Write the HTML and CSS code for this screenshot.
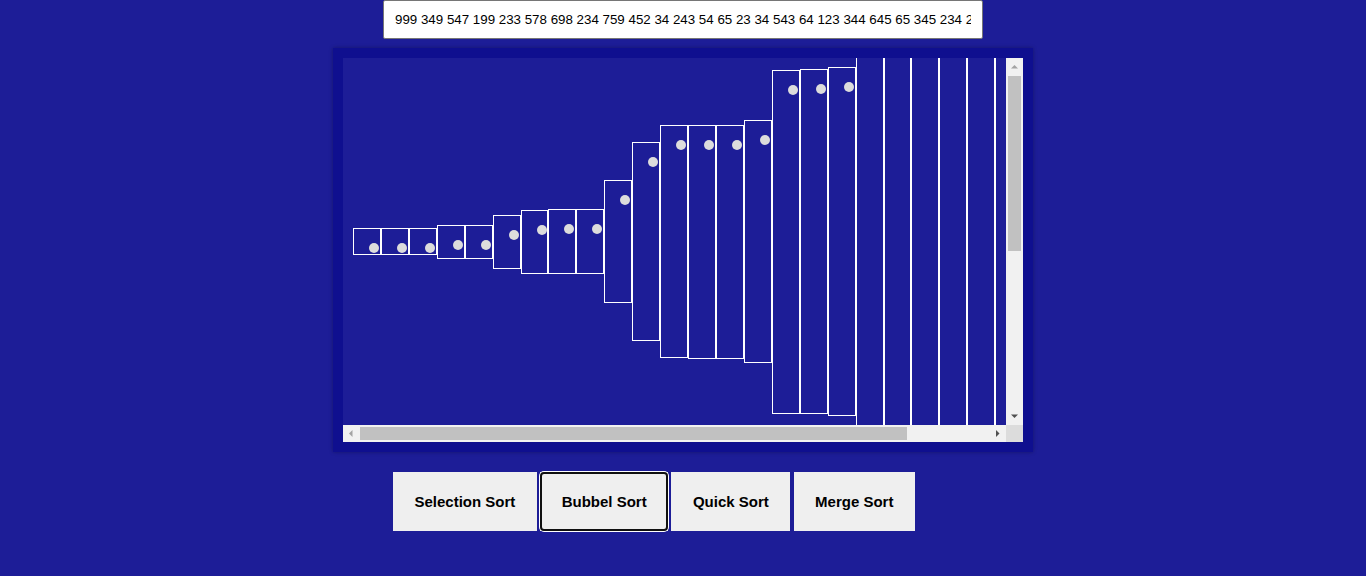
FILE: index.html
```html
<!DOCTYPE html>
<html>
<head>
<meta charset="utf-8">
<title>Sorting Visualizer</title>
<link rel="stylesheet" href="styles.css">
</head>
<body>
<div class="page">
  <input class="values" type="text" value="999 349 547 199 233 578 698 234 759 452 34 243 54 65 23 34 543 64 123 344 645 65 345 234 25 18 1030">
  <div class="frame">
    <div class="viewport">
      <div class="bars">
        <div class="bar" style="height:18px"><span class="dot"></span></div>
        <div class="bar" style="height:23px"><span class="dot"></span></div>
        <div class="bar" style="height:25px"><span class="dot"></span></div>
        <div class="bar" style="height:34px"><span class="dot"></span></div>
        <div class="bar" style="height:34px"><span class="dot"></span></div>
        <div class="bar" style="height:54px"><span class="dot"></span></div>
        <div class="bar" style="height:64px"><span class="dot"></span></div>
        <div class="bar" style="height:65px"><span class="dot"></span></div>
        <div class="bar" style="height:65px"><span class="dot"></span></div>
        <div class="bar" style="height:123px"><span class="dot"></span></div>
        <div class="bar" style="height:199px"><span class="dot"></span></div>
        <div class="bar" style="height:233px"><span class="dot"></span></div>
        <div class="bar" style="height:234px"><span class="dot"></span></div>
        <div class="bar" style="height:234px"><span class="dot"></span></div>
        <div class="bar" style="height:243px"><span class="dot"></span></div>
        <div class="bar" style="height:344px"><span class="dot"></span></div>
        <div class="bar" style="height:345px"><span class="dot"></span></div>
        <div class="bar" style="height:349px"><span class="dot"></span></div>
        <div class="bar" style="height:452px"><span class="dot"></span></div>
        <div class="bar" style="height:543px"><span class="dot"></span></div>
        <div class="bar" style="height:547px"><span class="dot"></span></div>
        <div class="bar" style="height:578px"><span class="dot"></span></div>
        <div class="bar" style="height:645px"><span class="dot"></span></div>
        <div class="bar" style="height:698px"><span class="dot"></span></div>
        <div class="bar" style="height:759px"><span class="dot"></span></div>
        <div class="bar" style="height:999px"><span class="dot"></span></div>
        <div class="bar" style="height:1030px"><span class="dot"></span></div>
      </div>
    </div>
    <div class="vscroll">
      <svg class="arrow" width="17" height="17" viewBox="0 0 17 17"><polygon class="arrow-off" points="5,10.5 12,10.5 8.5,7"/></svg>
      <div class="vtrack"><div class="vthumb"></div></div>
      <svg class="arrow" width="17" height="17" viewBox="0 0 17 17"><polygon class="arrow-on" points="5,6.5 12,6.5 8.5,10"/></svg>
    </div>
    <div class="hscroll">
      <svg class="arrow" width="17" height="17" viewBox="0 0 17 17"><polygon class="arrow-off" points="9.5,5 9.5,12 6,8.5"/></svg>
      <div class="htrack"><div class="hthumb"></div></div>
      <svg class="arrow" width="17" height="17" viewBox="0 0 17 17"><polygon class="arrow-on" points="7,5 7,12 10.5,8.5"/></svg>
    </div>
    <div class="corner"></div>
  </div>
  <div class="buttons">
    <button class="btn" type="button">Selection Sort</button>
    <button class="btn btn-active" type="button">Bubbel Sort</button>
    <button class="btn" type="button">Quick Sort</button>
    <button class="btn" type="button">Merge Sort</button>
  </div>
</div>
</body>
</html>
```

FILE: styles.css
```css
html, body {
  margin: 0;
  padding: 0;
}

body {
  background: #1d1d97;
  font-family: "Liberation Sans", Arial, sans-serif;
  height: 576px;
  overflow: hidden;
}

.page {
  display: flex;
  flex-direction: column;
  align-items: center;
}

.values {
  box-sizing: border-box;
  width: 600px;
  height: 39px;
  margin: 0;
  padding: 0 11px;
  border: 1px solid #767676;
  border-radius: 2px;
  background: #fff;
  color: #000;
  font-family: "Liberation Sans", Arial, sans-serif;
  font-size: 13.333px;
  outline: none;
}

.frame {
  box-sizing: border-box;
  width: 700px;
  height: 404px;
  margin-top: 9px;
  border: 10px solid #0f0f8f;
  box-shadow: 0 0 4px rgba(0, 0, 0, 0.3);
  background: #1d1d97;
  display: grid;
  grid-template-columns: 663px 17px;
  grid-template-rows: 367px 17px;
}

.viewport {
  overflow: hidden;
  height: 367px;
}

.bars {
  display: flex;
  align-items: center;
  height: 100%;
  padding-left: 10px;
}

.bar {
  flex: none;
  box-sizing: border-box;
  width: 27.93px;
  min-height: 27px;
  border: 1px solid #fff;
  padding: 14px 0 0 15px;
}

.dot {
  display: block;
  width: 10px;
  height: 10px;
  border-radius: 50%;
  background: #dcdcdc;
}

/* drawn scrollbars */
.vscroll {
  display: flex;
  flex-direction: column;
  background: #f1f1f1;
}

.hscroll {
  display: flex;
  background: #f1f1f1;
}

.arrow {
  display: block;
  flex: none;
}

.arrow-off {
  fill: #a3a3a3;
}

.arrow-on {
  fill: #505050;
}

.vtrack {
  flex: 1;
  padding: 1px 2px 0;
}

.vthumb {
  height: 175px;
  background: #c1c1c1;
}

.htrack {
  flex: 1;
  padding: 2px 0;
}

.hthumb {
  width: 547px;
  height: 13px;
  background: #c1c1c1;
}

.corner {
  background: #dcdcdc;
}

.buttons {
  box-sizing: border-box;
  width: 600px;
  padding-left: 10px;
  margin-top: 20px;
  display: flex;
  gap: 3.3px;
}

.btn {
  position: relative;
  margin: 0;
  padding: 21px 21.5px;
  border: none;
  background: #efefef;
  color: #000;
  font-family: "Liberation Sans", Arial, sans-serif;
  font-size: 15px;
  font-weight: bold;
  line-height: 17px;
}

.btn-active::after {
  content: "";
  position: absolute;
  inset: 0;
  border: 2px solid #101010;
  border-radius: 4px;
  box-shadow: 0 0 0 1px #fff;
}
```
